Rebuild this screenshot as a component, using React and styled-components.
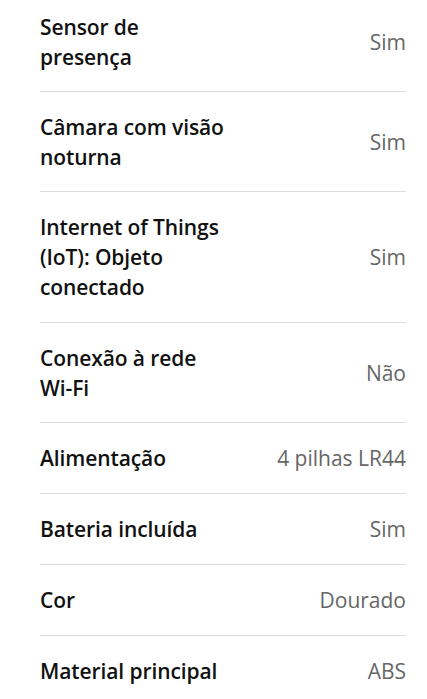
import React from 'react';
import styled, { createGlobalStyle } from 'styled-components';

const GlobalStyle = createGlobalStyle`
  html, body {
    margin: 0;
    padding: 0;
    background: #ffffff;
  }
  body {
    font-family: 'Open Sans', 'Noto Sans', sans-serif;
    -webkit-font-smoothing: antialiased;
  }
`;

const Page = styled.div`
  height: 699px;
  overflow: hidden;
  background: #ffffff;
`;

const List = styled.dl`
  margin: -8px 21px 0 40px;
  padding: 0;
`;

const Row = styled.div`
  display: flex;
  align-items: center;
  justify-content: space-between;
  gap: 24px;
  padding: 20px 0 ${(props) => (props.$lines === 2 ? '19px' : '20px')};
  border-bottom: ${(props) => (props.$last ? 'none' : '1px solid #dcdcdc')};
`;

const Label = styled.dt`
  margin: 0;
  max-width: ${(props) => props.$width || '240px'};
  font-size: 21px;
  line-height: 30px;
  font-weight: 600;
  letter-spacing: -0.1px;
  color: #111111;
`;

const Value = styled.dd`
  margin: 0;
  font-size: 21px;
  line-height: 30px;
  font-weight: 400;
  color: #666666;
  text-align: right;
  white-space: nowrap;
`;

const specs = [
  { label: 'Sensor de presença', value: 'Sim', width: '130px', lines: 2 },
  { label: 'Câmara com visão noturna', value: 'Sim', width: '210px', lines: 2 },
  { label: 'Internet of Things (IoT): Objeto conectado', value: 'Sim', width: '210px', lines: 3 },
  { label: 'Conexão à rede Wi-Fi', value: 'Não', width: '175px', lines: 2 },
  { label: 'Alimentação', value: '4 pilhas LR44', lines: 1 },
  { label: 'Bateria incluída', value: 'Sim', lines: 1 },
  { label: 'Cor', value: 'Dourado', lines: 1 },
  { label: 'Material principal', value: 'ABS', lines: 1 },
];

const App = () => (
  <Page>
    <GlobalStyle />
    <List>
      {specs.map((spec, i) => (
        <Row key={spec.label} $lines={spec.lines} $last={i === specs.length - 1}>
          <Label $width={spec.width}>{spec.label}</Label>
          <Value>{spec.value}</Value>
        </Row>
      ))}
    </List>
  </Page>
);

export default App;
